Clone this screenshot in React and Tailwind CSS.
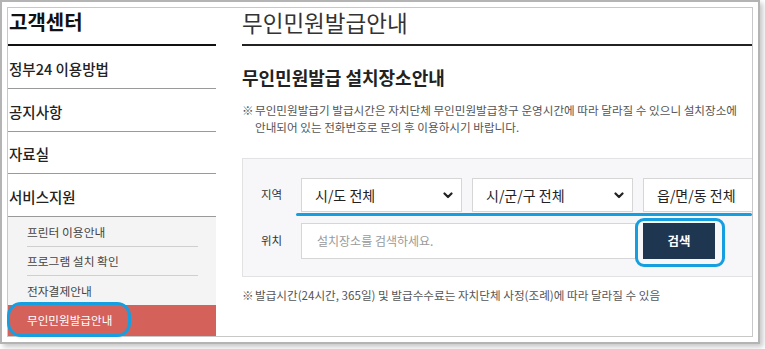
import React from "react";

const font = { fontFamily: '"Noto Sans CJK KR", "Noto Sans", sans-serif' };

function Chevron() {
  return (
    <svg width="10" height="7" viewBox="0 0 10 7" className="shrink-0">
      <path d="M1.5 1.5 L5 5 L8.5 1.5" fill="none" stroke="#222" strokeWidth="2.2" strokeLinecap="round" strokeLinejoin="round" />
    </svg>
  );
}

function Select({ label, chevron = true }) {
  return (
    <div className="w-[161px] h-[34px] shrink-0 bg-white border border-[#d6d6d6] flex items-center justify-between pl-[13px] pr-[8px] text-[14px] text-[#222]">
      <span>{label}</span>
      {chevron && <Chevron />}
    </div>
  );
}

export default function App() {
  const menus = [
    { t: "정부24 이용방법", h: "h-[43px]" },
    { t: "공지사항", h: "h-[43px]" },
    { t: "자료실", h: "h-[42px]" },
    { t: "서비스지원", h: "h-[43px]" },
  ];
  return (
    <div className="w-[765px] h-[349px] relative bg-white overflow-hidden" style={font}>
      <div className="w-[760px] h-[344px] border-2 border-[#b4b4b4] bg-white p-[5px] shadow-[3px_3px_5px_rgba(0,0,0,0.22)]">
        <div className="w-full h-full border border-[#c8c8c8] overflow-hidden flex">
          <aside className="w-[208px] shrink-0 flex flex-col">
            <div className="h-[38px] shrink-0 border-b-2 border-[#111] pl-[1px] text-[20px] font-bold leading-[28px] text-[#111]">
              고객센터
            </div>
            {menus.map((m) => (
              <div
                key={m.t}
                className={`${m.h} shrink-0 border-b border-[#9a9a9a] pl-[1px] pt-[3px] flex items-center text-[14.5px] font-medium text-[#222]`}
              >
                {m.t}
              </div>
            ))}
            <div className="flex-1 bg-[#f4f4f4] flex flex-col">
              <div className="h-[30px] shrink-0 ml-[19px] mr-[18px] border-b border-[#cfcfcf] flex items-center text-[11.75px] text-[#444]">
                프린터 이용안내
              </div>
              <div className="h-[29px] shrink-0 ml-[19px] mr-[18px] border-b border-[#cfcfcf] flex items-center text-[11.75px] text-[#444]">
                프로그램 설치 확인
              </div>
              <div className="h-[29px] shrink-0 ml-[19px] mr-[18px] flex items-center text-[11.75px] text-[#444]">
                전자결제안내
              </div>
              <div className="flex-1 bg-[#d4625a] pl-[19px] flex items-center text-[11.6px] text-white">
                무인민원발급안내
              </div>
            </div>
          </aside>

          <main className="ml-[26px] flex-1 min-w-0 flex flex-col">
            <div className="h-[38px] shrink-0 border-b-2 border-[#222] text-[22.5px] leading-[28px] text-[#333]">
              무인민원발급안내
            </div>
            <div className="mt-[19px] text-[18px] font-bold leading-[24px] text-[#222] whitespace-nowrap">
              무인민원발급 설치장소안내
            </div>
            <div className="mt-[13px] flex text-[11.6px] leading-[17px] text-[#555] whitespace-nowrap">
              <span className="w-[13px] shrink-0">※</span>
              <span>
                무인민원발급기 발급시간은 자치단체 무인민원발급창구 운영시간에 따라 달라질 수 있으니 설치장소에
                <br />
                안내되어 있는 전화번호로 문의 후 이용하시기 바랍니다.
              </span>
            </div>
            <div className="mt-[22px] w-[560px] shrink-0 bg-[#f7f7f9] border border-[#e2e2e4] pt-[19px] pb-[17px] pl-[18px] flex flex-col gap-[11px]">
              <div className="flex items-center">
                <span className="w-[40px] shrink-0 text-[11.5px] text-[#333]">지역</span>
                <div className="flex gap-[10px]">
                  <Select label="시/도 전체" />
                  <Select label="시/군/구 전체" />
                  <Select label="읍/면/동 전체" />
                </div>
              </div>
              <div className="flex items-center">
                <span className="w-[40px] shrink-0 text-[11.5px] text-[#333]">위치</span>
                <div className="w-[335px] h-[36px] shrink-0 bg-white border border-[#d6d6d6] flex items-center pl-[15px] text-[12px] text-[#9a9a9a]">
                  설치장소를 검색하세요.
                </div>
                <div className="ml-[7px] w-[72px] h-[36px] shrink-0 bg-[#1f3651] flex items-center justify-center text-[12.5px] font-bold text-white">
                  검색
                </div>
              </div>
            </div>
            <div className="mt-[10px] flex text-[11.6px] leading-[17px] text-[#555] whitespace-nowrap">
              <span className="w-[13px] shrink-0">※</span>
              <span>발급시간(24시간, 365일) 및 발급수수료는 자치단체 사정(조례)에 따라 달라질 수 있음</span>
            </div>
          </main>
        </div>
      </div>

      {/* annotation overlays */}
      <div className="absolute left-[296px] top-[213px] w-[456px] h-[3px] rounded-full bg-[#159fe0]" />
      <div className="absolute left-[635px] top-[218px] w-[90px] h-[49px] border-[3px] border-[#159fe0] rounded-[9px]" />
      <div className="absolute left-[7px] top-[302px] w-[124px] h-[35px] border-[3px] border-[#159fe0] rounded-[14px]" />
    </div>
  );
}
